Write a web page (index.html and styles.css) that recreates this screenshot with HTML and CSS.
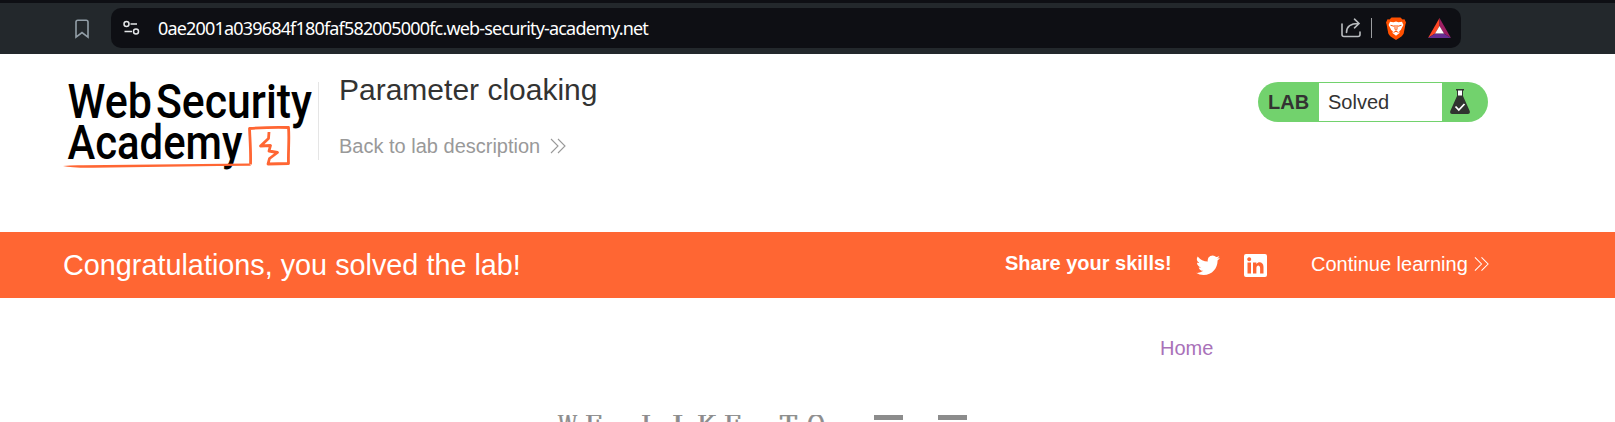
FILE: index.html
```html
<!DOCTYPE html>
<html lang="en">
<head>
<meta charset="utf-8">
<title>Parameter cloaking</title>
<link rel="stylesheet" href="styles.css">
</head>
<body>
<div class="toolbar">
  <svg class="bookmark" width="14" height="20" viewBox="0 0 14 20"><path d="M1 18.200V3Q1 1.200 2.800 1.200H11.200Q13 1.200 13 3V18.200L7 13.500Z"/></svg>
  <div class="address">
    <svg class="tune" width="17" height="16" viewBox="0 0 17 16"><circle cx="3.500" cy="4" r="2.500"/><path d="M7.500 4H14M1.500 11.500H9"/><circle cx="13" cy="11.500" r="2.500"/></svg>
    <span class="url">0ae2001a039684f180faf582005000fc.web-security-academy.net</span>
    <svg class="share" width="20" height="20" viewBox="0 0 20 20"><path d="M1 6V16.500Q1 18.500 3 18.500H17Q19 18.500 19 16.500V14"/><path d="M5.500 14.500C5.500 8.500 9 5.500 17.500 5.500M13.500 1.200L18 5.500L13.500 9.800"/></svg>
    <span class="separator"></span>
    <svg class="lion" width="20" height="23" viewBox="0 0 20 23"><path fill="#ff5000" d="M5.500 0.500H14.500L16.500 2.500L18.500 2.300L20 5.500L19.400 7.500L17.700 16.500Q17 19 10 23Q3 19 2.300 16.500L.6 7.500L0 5.500L1.500 2.300L3.500 2.500Z"/><path fill="#fff" d="M4 4.800L7.500 5.200L10 4.500L12.500 5.200L16 4.800L17.400 8L16 10.500L14.800 13L13.200 14.200L13.500 16L10 18.800L6.500 16L6.800 14.200L5.200 13L4 10.500L2.600 8Z"/><path fill="none" stroke="#ff5000" stroke-width="1" d="M4.500 8.300L8.200 9.300M15.500 8.300L11.800 9.300M9 8V12.500L10 13.300L11 12.500V8M7.500 15.400L10 14.300L12.500 15.400"/></svg>
    <svg class="bat" width="23" height="20" viewBox="0 0 23 20"><path fill="#ff4724" d="M11.500 0V8L7 15.500L0 20Z"/><path fill="#9e1f63" d="M11.500 0L23 20L16 15.500L11.500 8Z"/><path fill="#662d91" d="M0 20L7 15.500H16L23 20Z"/><path fill="#fff" d="M11.500 8L16 15.500H7Z"/></svg>
  </div>
</div>
<header class="lab-header">
  <svg class="logo" width="252" height="92" viewBox="0 0 252 92" role="img" aria-label="Web Security Academy">
    <g class="wordmark">
      <text x="4.500" y="38.300" textLength="84.500" lengthAdjust="spacingAndGlyphs">Web</text>
      <text x="93" y="38.300" textLength="156" lengthAdjust="spacingAndGlyphs">Security</text>
      <text x="4.500" y="79" textLength="175" lengthAdjust="spacingAndGlyphs">Academy</text>
    </g>
    <path class="rule" d="M0 86Q8 85 20 85.300L186 83.500L188 85.700L155 86L30 87.800Q8 88 0 86Z"/>
    <path class="frame" d="M187.500 84.500C188 72 187 60 186.500 48.500C200 47.500 214 47 225.500 47.500C226.500 60 225 72 225.500 83.500L205 84L206.500 78.500L214.500 72.500L206 71L207.500 65.500L197.500 66L205.500 58.500L206 52"/>
  </svg>
  <div class="title-block">
    <h2>Parameter cloaking</h2>
    <a class="back"><span class="back-label">Back to lab description</span><svg class="chevrons" width="16" height="16" viewBox="0 0 16 16"><path d="M1 1L8 8L1 15M8 1L15 8L8 15"/></svg></a>
  </div>
  <div class="status">
    <span class="lab">LAB</span>
    <span class="solved">Solved</span>
    <svg class="flask" width="20" height="26" viewBox="0 0 20 26"><path fill="#fff" d="M7.500 1H12.500V7H7.500Z"/><path d="M6 0H14V1.500H13V7L19.700 22Q20.500 25 18 25H2Q-.5 25 .3 22L7 7V1.500H6ZM8 1.500V6.500H12V1.500Z" fill="#30332f" fill-rule="evenodd"/><path fill="none" stroke="#fff" stroke-width="1.800" d="M5.500 17.500L8.800 21L14.500 15"/></svg>
  </div>
</header>
<section class="banner">
  <h4>Congratulations, you solved the lab!</h4>
  <span class="skills">Share your skills!</span>
  <svg class="twitter" width="24" height="21" viewBox="0 0 24 20"><path d="M24 2.370a9.600 9.600 0 0 1-2.830.780A4.900 4.900 0 0 0 23.340.420a9.700 9.700 0 0 1-3.130 1.190 4.920 4.920 0 0 0-8.390 4.490A13.970 13.970 0 0 1 1.670.970 4.930 4.930 0 0 0 3.190 7.540a4.900 4.900 0 0 1-2.230-.620c-.050 2.280 1.580 4.410 3.950 4.890a4.900 4.900 0 0 1-2.220.080 4.930 4.930 0 0 0 4.600 3.420A9.900 9.900 0 0 1 0 17.350 13.930 13.930 0 0 0 7.550 19.560c9.140 0 14.310-7.720 14-14.640A10 10 0 0 0 24 2.370Z"/></svg>
  <svg class="linkedin" width="23" height="23" viewBox="0 0 23 23"><path fill-rule="evenodd" d="M2 0H21Q23 0 23 2V21Q23 23 21 23H2Q0 23 0 21V2Q0 0 2 0ZM3.500 8.500V19.500H7V8.500ZM5.200 3.200A2 2 0 1 0 5.210 3.200ZM9 8.500V19.500H12.400V14C12.400 10.500 16.100 10.600 16.100 14V19.500H19.500V13C19.500 8 14.500 7 12.400 10.200V8.500Z"/></svg>
  <a class="continue"><span class="continue-label">Continue learning</span><svg class="chevrons" width="15" height="16" viewBox="0 0 16 16"><path d="M1 1L8 8L1 15M8 1L15 8L8 15"/></svg></a>
</section>
<nav><a>Home</a></nav>
<svg class="slogan" width="412" height="7" viewBox="0 0 412 7">
  <g class="letters">
    <text x="1" y="21" textLength="19" lengthAdjust="spacingAndGlyphs">W</text>
    <text x="28" y="21" textLength="18" lengthAdjust="spacingAndGlyphs">E</text>
    <text x="84" y="21" textLength="17" lengthAdjust="spacingAndGlyphs">L</text>
    <text x="115" y="21">I</text>
    <text x="140" y="21" textLength="19" lengthAdjust="spacingAndGlyphs">K</text>
    <text x="167" y="21" textLength="18" lengthAdjust="spacingAndGlyphs">E</text>
    <text x="223" y="21" textLength="17" lengthAdjust="spacingAndGlyphs">T</text>
    <text x="250" y="21" textLength="18" lengthAdjust="spacingAndGlyphs">O</text>
  </g>
  <path d="M317 0H346V5H317ZM381 0H410V5H381Z"/>
</svg>
</body>
</html>
```
FILE: styles.css
```css
* { box-sizing: border-box; }
body { margin: 0; height: 422px; overflow: hidden; background: #fff; color: #333332; font-family: "Liberation Sans", Arial, sans-serif; }
svg { display: block; flex: none; }
span, a, h2, h4 { white-space: nowrap; }

.toolbar { display: flex; align-items: center; height: 54px; padding-left: 75px; background: #23282c; border-top: 3px solid #0e0f14; }
.bookmark { fill: none; stroke: #929ea7; stroke-width: 1.6; }
.address { display: flex; align-items: center; width: 1350px; height: 40px; margin-left: 22px; margin-bottom: 1px; padding-left: 12px; border-radius: 10px; background: #0e0f14; }
.tune { fill: none; stroke: #e4e6e8; stroke-width: 1.5; }
.url { width: 1183px; margin-left: 18px; color: #fff; font: 18px/24px "Noto Sans", sans-serif; letter-spacing: -.82px; }
.share { fill: none; stroke: #b9bcbf; stroke-width: 1.6; stroke-linecap: round; }
.separator { width: 1px; height: 20px; margin: 0 14px 0 10px; background: #9b9da0; }
.bat { margin-left: 22px; }

.lab-header { display: flex; height: 178px; padding: 26px 0 0 63px; }
.wordmark { font: 500 48px Roboto, sans-serif; fill: #000; }
.rule { fill: #ff6633; }
.frame { fill: none; stroke: #ff6633; stroke-width: 2.8; stroke-linejoin: round; }
.title-block { width: 940px; height: 78px; margin-left: 3px; margin-top: 2px; padding-left: 20px; border-left: 1px solid #e5e5e5; }
h2 { margin: -10px 0 0; font-weight: 400; font-size: 30px; line-height: 36px; }
.back { display: flex; align-items: center; margin-top: 26px; color: #999; font-size: 20px; line-height: 24px; }
.chevrons { fill: none; stroke: currentColor; stroke-width: 1.1; }
.back .chevrons { margin-left: 10px; }
.status { display: flex; align-items: center; width: 230px; height: 40px; margin: 2px 0 0; padding: 1px; border-radius: 20px; background: #72d26d; font-size: 20px; }
.lab { width: 60px; padding-left: 9px; font-weight: 700; }
.solved { width: 123px; height: 38px; padding-left: 9px; line-height: 38px; background: #fff; }
.flask { margin-left: 8px; }

.banner { display: flex; align-items: center; height: 66px; padding-left: 63px; background: #ff6633; color: #fff; }
h4 { width: 942px; margin: 0; font-size: 28.8px; font-weight: 400; }
.skills { width: 191px; margin-bottom: 5px; font-size: 20px; font-weight: 700; line-height: 24px; }
.twitter, .linkedin { fill: #fff; }
.linkedin { margin-left: 24px; }
.continue { display: flex; align-items: center; margin-left: 44px; margin-bottom: 2px; font-size: 20px; }
.continue .chevrons { margin-left: 6px; }
nav { padding: 38px 0 0 1160px; color: #a971b9; font-size: 20px; line-height: 24px; }
.slogan { margin: 55px 0 0 557px; fill: #8c8c8c; }
.letters { font: 29px "DejaVu Serif", serif; stroke: #8c8c8c; stroke-width: .8; }
```
